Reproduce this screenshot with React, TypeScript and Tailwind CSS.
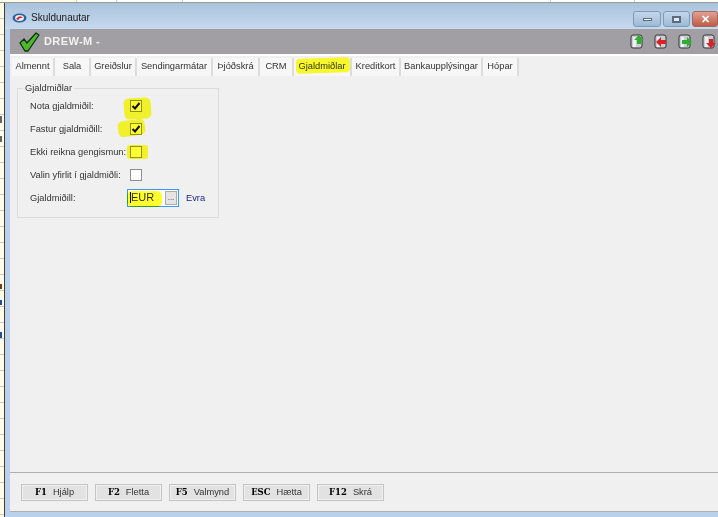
const font = "[font-family:'Liberation_Sans',sans-serif]";

const tabs = [
  { label: "Almennt", w: "w-[43px]" },
  { label: "Sala", w: "w-[36px]" },
  { label: "Greiðslur", w: "w-[46px]" },
  { label: "Sendingarmátar", w: "w-[76px]" },
  { label: "Þjóðskrá", w: "w-[47px]" },
  { label: "CRM", w: "w-[34px]" },
  { label: "Gjaldmiðlar", w: "w-[58px]" },
  { label: "Kreditkort", w: "w-[49px]" },
  { label: "Bankaupplýsingar", w: "w-[82px]" },
  { label: "Hópar", w: "w-[36px]" },
];

const footerButtons = [
  { key: "F1", label: "Hjálp" },
  { key: "F2", label: "Fletta" },
  { key: "F5", label: "Valmynd" },
  { key: "ESC", label: "Hætta" },
  { key: "F12", label: "Skrá" },
];

const Barrel = ({ color, dir }: { color: string; dir: "up" | "left" | "right" | "down" }) => {
  const arrows = {
    up: "M9 1 L14 6 L11 6 L11 10 L7 10 L7 6 L4 6 Z",
    down: "M9 14 L14 9 L11 9 L11 5 L7 5 L7 9 L4 9 Z",
    left: "M2 8 L7 3 L7 6 L12 6 L12 10 L7 10 L7 13 Z",
    right: "M14 8 L9 3 L9 6 L4 6 L4 10 L9 10 L9 13 Z",
  };
  return (
    <svg width="15" height="15" viewBox="0 0 15 15">
      <rect x="1" y="1" width="11" height="13" rx="2" fill="#c9ced3" stroke="#33363b" />
      <rect x="3" y="3" width="3" height="10" fill="#eef1f3" />
      <path d={arrows[dir]} fill={color} />
    </svg>
  );
};

const Check = ({ checked }: { checked?: boolean }) => (
  <span className="flex h-[12px] w-[12px] items-center justify-center border border-[#8e8f8f] bg-white">
    {checked && (
      <svg width="10" height="10" viewBox="0 0 10 10">
        <path d="M1.5 5 L4 7.5 L8.5 2" fill="none" stroke="#111" strokeWidth="2" />
      </svg>
    )}
  </span>
);

const Row = ({ label, children }: { label: string; children: React.ReactNode }) => (
  <div className="flex h-[23px] items-center">
    <span className="w-[100px] shrink-0 whitespace-nowrap pt-[2px] text-[#333]">{label}</span>
    {children}
  </div>
);

export default function App() {
  return (
    <div className={`${font} relative flex h-[517px] w-[718px] flex-col overflow-hidden bg-white text-[9.3px] leading-none text-[#333]`}>
      {/* spreadsheet behind the window */}
      <div className="flex h-[3px] shrink-0 border-b border-[#9a9a9a]">
        <div className="w-[77px] border-r border-[#ccc] bg-[#fffbe6]" />
        <div className="w-[40px] border-r border-[#ccc]" />
        <div className="w-[66px] border-r border-[#ccc]" />
        <div className="w-[368px] border-r border-[#ccc]" />
        <div className="w-[84px] border-r border-[#ccc]" />
      </div>
      <div className="flex min-h-0 flex-1">
        <div className="relative w-[4px] shrink-0 overflow-hidden bg-[#fffbe6] bg-[repeating-linear-gradient(to_bottom,transparent_0,transparent_15px,#c9c9c9_15px,#c9c9c9_16px)]">
          <div className="absolute left-0 top-[113px] h-[7px] w-[2px] bg-[#666]" />
          <div className="absolute left-0 top-[133px] h-[6px] w-[2px] bg-[#666]" />
          <div className="absolute left-0 top-[281px] h-[5px] w-[2px] bg-[#7a3a10]" />
          <div className="absolute left-0 top-[297px] h-[5px] w-[2px] bg-[#1f4e9a]" />
          <div className="absolute left-0 top-[329px] h-[6px] w-[2px] bg-[#1f4e9a]" />
        </div>

        {/* window */}
        <div className="flex min-w-0 flex-1 flex-col border-l border-[#3f3f3f] bg-[#b9d1ea]">
          <div className="flex h-[26px] shrink-0 items-start bg-gradient-to-b from-[#a9c3dc] to-[#c6d9ee] pl-[7px]">
            <svg className="mt-[10px]" width="15" height="10" viewBox="0 0 15 10">
              <ellipse cx="7.5" cy="5" rx="7" ry="4.5" fill="#2f5f9e" />
              <ellipse cx="7.5" cy="5" rx="4.5" ry="3" fill="#e8eef5" />
              <path d="M4 6 Q8 1 11 5 Q8 4 6 7 Z" fill="#c8262c" />
            </svg>
            <span className="ml-[4px] mt-[10px] text-[10px] text-[#1a1a1a]">Skuldunautar</span>
            <div className="ml-auto mt-[8px] flex gap-[2px]">
              <div className="flex h-[16px] w-[28px] items-center justify-center rounded-[3px] border border-[#7f9ab5] bg-gradient-to-b from-[#c3d6ea] to-[#9dbad6]">
                <div className="h-[3px] w-[9px] border border-[#5a6b80] bg-white" />
              </div>
              <div className="flex h-[16px] w-[27px] items-center justify-center rounded-[3px] border border-[#7f9ab5] bg-gradient-to-b from-[#c3d6ea] to-[#9dbad6]">
                <div className="h-[7px] w-[9px] border-2 border-[#5a6b80] bg-[#dfe9f3]" />
              </div>
              <div className="flex h-[16px] w-[26px] items-center justify-center rounded-[3px] border border-[#a06a60] bg-gradient-to-b from-[#e2a193] to-[#bf5a46] text-[11px] font-bold text-white">
                ✕
              </div>
            </div>
          </div>

          <div className="flex min-h-0 flex-1 pl-[5px]">
            <div className="flex min-w-0 flex-1 flex-col bg-[#f0f0f0]">
              <div className="flex h-[27px] shrink-0 items-center border-b-2 border-white bg-[#a19fa3] pl-[8px] pr-[1px]">
                <svg width="22" height="22" viewBox="0 0 22 22">
                  <path d="M2 12 L6 8 L9 12 L18 2 L21 4 L10 20 L7 20 Z" fill="#4cb82e" stroke="#12300c" strokeWidth="1.3" strokeLinejoin="round" />
                </svg>
                <span className="ml-[4px] text-[11px] font-bold tracking-[0.4px] text-[#f2f2f2]">DREW-M -</span>
                <div className="ml-auto flex gap-[9px]">
                  <Barrel color="#2fae2f" dir="up" />
                  <Barrel color="#d8222a" dir="left" />
                  <Barrel color="#2fae2f" dir="right" />
                  <Barrel color="#d8222a" dir="down" />
                </div>
              </div>

              <div className="flex h-[20px] shrink-0 items-stretch pl-[2px] pt-[2px]">
                {tabs.map((t) => (
                  <div
                    key={t.label}
                    className={`${t.w} flex shrink-0 items-center justify-center whitespace-nowrap border-r-2 border-[#dcdcdc] bg-[#f7f7f7]`}
                  >
                    {t.label}
                  </div>
                ))}
              </div>

              <div className="min-h-0 flex-1 pl-[7px] pt-[8px]">
                <fieldset className="h-[134px] w-[202px] border border-[#dcdcdc] pl-[12px] pr-0 pt-[1px]">
                  <legend className="-ml-[7px] px-[2px]">Gjaldmiðlar</legend>
                  <Row label="Nota gjaldmiðil:"><Check checked /></Row>
                  <Row label="Fastur gjaldmiðill:"><Check checked /></Row>
                  <Row label="Ekki reikna gengismun:"><Check /></Row>
                  <Row label="Valin yfirlit í gjaldmiðli:"><Check /></Row>
                  <Row label="Gjaldmiðill:">
                    <div className="-ml-[3px] flex h-[18px] w-[52px] items-center justify-between border border-[#3399ff] bg-white pl-[2px] pr-[1px] text-[11px]">
                      <span className="border-l border-black">EUR</span>
                      <span className="flex h-[14px] w-[12px] items-center justify-center border border-[#aaa] bg-[#e4e4e4] text-[8px]">...</span>
                    </div>
                    <span className="ml-[7px] pt-[2px] text-[#22228a]">Evra</span>
                  </Row>
                </fieldset>
              </div>

              <div className="flex h-[40px] shrink-0 items-start gap-[7px] border-y border-[#b0b0b0] pl-[11px] pt-[11px]">
                {footerButtons.map((b) => (
                  <div
                    key={b.key}
                    className="flex h-[17px] w-[67px] items-center justify-center gap-[6px] border border-[#c4c4c4] bg-[#e2e2e2] shadow-[inset_0_0_0_1px_#f0f0f0]"
                  >
                    <span className="font-['DejaVu_Serif',serif] text-[8.5px] font-bold text-black">{b.key}</span>
                    <span>{b.label}</span>
                  </div>
                ))}
              </div>
            </div>
          </div>
          <div className="h-[5px] shrink-0" />
        </div>
      </div>

      {/* highlighter marks */}
      <div className="pointer-events-none absolute inset-0 mix-blend-multiply">
        <div className="absolute left-[296px] top-[58px] h-[15px] w-[54px] rotate-[-2deg] rounded-[4px] bg-[#ffff2e]" />
        <div className="absolute left-[124px] top-[98px] h-[21px] w-[27px] rotate-[-4deg] rounded-[5px] bg-[#ffff2e]" />
        <div className="absolute left-[118px] top-[120px] h-[16px] w-[27px] rotate-[-8deg] rounded-[5px] bg-[#ffff2e]" />
        <div className="absolute left-[127px] top-[145px] h-[14px] w-[21px] rounded-[3px] bg-[#ffff2e]" />
        <div className="absolute left-[127px] top-[191px] h-[16px] w-[35px] rounded-[5px] bg-[#ffff2e]" />
      </div>
    </div>
  );
}
